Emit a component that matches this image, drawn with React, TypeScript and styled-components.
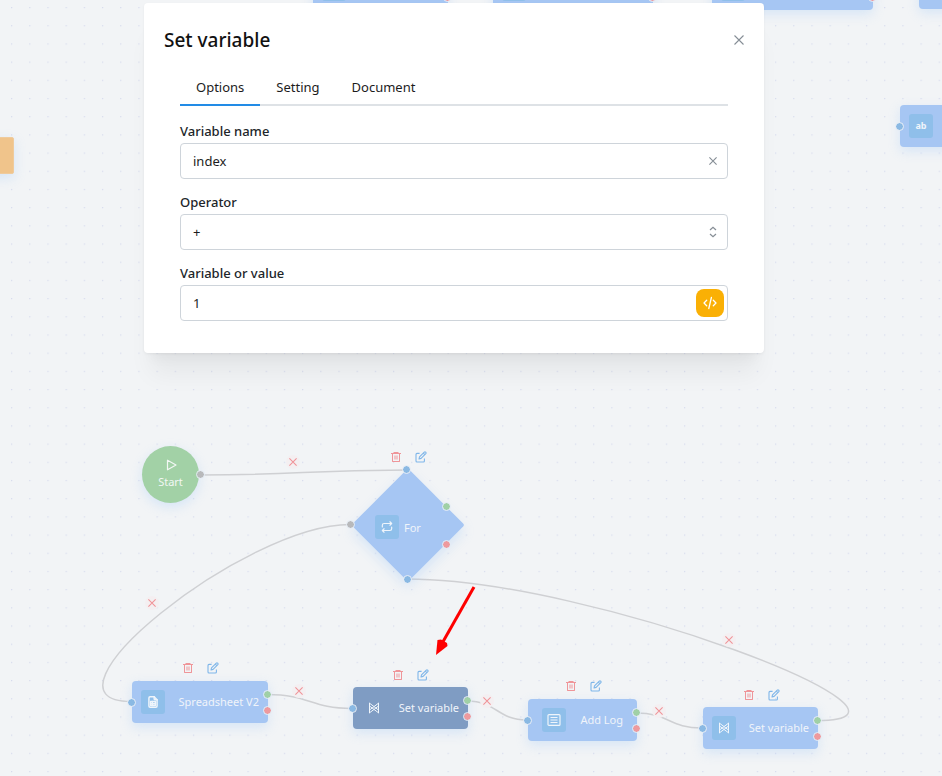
import React from "react";
import styled, { createGlobalStyle, css } from "styled-components";
import { RiDeleteBin6Line } from "react-icons/ri";
import { TbFileSpreadsheet, TbRepeat } from "react-icons/tb";

const GlobalStyle = createGlobalStyle`
  *, *::before, *::after { box-sizing: border-box; }
  body {
    margin: 0;
    background: #f2f4f6;
    font-family: "Noto Sans", "Open Sans", sans-serif;
    font-size: 13px;
    color: #111;
  }
  button, input, select { font: inherit; color: inherit; }
`;

const colors = {
  node: "#a6c6f3",
  active: "#7f9cc3",
  start: "#a2d1a6",
  chip: "#8fbfea",
  blue: "#8ab9e3",
  green: "#a0d0a6",
  red: "#ee9a9e",
  gray: "#b8b9bb",
  edge: "#cfd0d3",
};

const Page = styled.div`
  position: relative;
  min-height: 100vh;
  overflow: hidden;
`;

const Canvas = styled.main`
  position: absolute;
  inset: 0;
  overflow: hidden;
`;

const Drawing = styled.svg`
  position: absolute;
  inset: 0;
  width: 100%;
  height: 100%;
  pointer-events: none;
`;

type Box = { $x: number; $y: number };

const NodeCard = styled.div<Box & { $w: number; $active?: boolean; $wide?: boolean }>`
  position: absolute;
  left: ${(p) => p.$x}px;
  top: ${(p) => p.$y}px;
  width: ${(p) => p.$w}px;
  height: 42px;
  display: flex;
  align-items: center;
  justify-content: space-between;
  padding: 0 9px;
  ${(p) => p.$wide && css`padding: 0 14px;`}
  border-radius: 4px;
  background: ${(p) => (p.$active ? colors.active : colors.node)};
  box-shadow: 0 4px 12px rgba(150, 195, 250, 0.3);
  color: #f0f4fa;
  font-size: 11px;
  line-height: 16px;
  white-space: nowrap;
`;

const Chip = styled.span<{ $plain?: boolean }>`
  flex: none;
  display: flex;
  align-items: center;
  justify-content: center;
  width: 24px;
  height: 24px;
  border-radius: 3px;
  background: ${(p) => (p.$plain ? "transparent" : colors.chip)};
  color: #eff5fb;
  font-size: 9px;
  font-weight: 700;
`;

const StartNode = styled.div<Box>`
  position: absolute;
  left: ${(p) => p.$x}px;
  top: ${(p) => p.$y}px;
  width: 57px;
  height: 57px;
  border-radius: 50%;
  display: flex;
  flex-direction: column;
  align-items: center;
  justify-content: center;
  gap: 3px;
  background: ${colors.start};
  box-shadow: 0 4px 12px rgba(150, 195, 250, 0.3);
  color: #f2f7f4;
  font-size: 11px;
  line-height: 16px;
`;

const DiamondNode = styled.div<Box>`
  position: absolute;
  left: ${(p) => p.$x}px;
  top: ${(p) => p.$y}px;
  width: 114px;
  height: 114px;
  display: flex;
  align-items: center;
  gap: 5px;
  padding: 4px 0 0 24px;
  color: #f0f4fa;
  font-size: 11px;

  &::before {
    content: "";
    position: absolute;
    inset: 17px;
    border-radius: 2px;
    background: ${colors.node};
    box-shadow: 4px 4px 12px rgba(150, 195, 250, 0.3);
    transform: rotate(45deg);
  }

  > * { position: relative; }
`;

const Handle = styled.span<Box & { $tone: "blue" | "green" | "red" | "gray" }>`
  position: absolute;
  left: ${(p) => p.$x - 5}px;
  top: ${(p) => p.$y - 5}px;
  width: 9px;
  height: 9px;
  border-radius: 50%;
  background: ${(p) => colors[p.$tone]};
  border: 1px solid #e6edf5;
  background-clip: padding-box;
`;

const Tools = styled.div<Box>`
  position: absolute;
  left: ${(p) => p.$x}px;
  top: ${(p) => p.$y}px;
  display: flex;
  gap: 13px;
`;

const ToolButton = styled.button<{ $tone: "red" | "blue" }>`
  display: flex;
  padding: 0;
  border: 0;
  background: none;
  color: ${(p) => (p.$tone === "red" ? "#ef9599" : "#7fb6e9")};
  font-size: 12px;
  cursor: pointer;
`;

const EdgeButton = styled.button<Box>`
  position: absolute;
  left: ${(p) => p.$x - 7}px;
  top: ${(p) => p.$y - 7}px;
  width: 14px;
  height: 14px;
  display: flex;
  align-items: center;
  justify-content: center;
  padding: 0;
  border: 0;
  border-radius: 50%;
  background: #f4eff1;
  color: #f09297;
  cursor: pointer;
`;

const SideBlock = styled.div<Box>`
  position: absolute;
  left: ${(p) => p.$x}px;
  top: ${(p) => p.$y}px;
  width: 60px;
  height: 37px;
  border: 1px solid #efcb9d;
  border-radius: 2px;
  background: #f0c48b;
  box-shadow: 0 4px 12px rgba(150, 195, 250, 0.3);
`;

const Overlay = styled.div`
  position: relative;
  display: flex;
  justify-content: center;
  padding: 3px 34px 0 0;
  pointer-events: none;
`;

const Modal = styled.section`
  width: 620px;
  max-width: 100%;
  padding: 20px 20px 32px;
  border-radius: 4px;
  background: #fff;
  box-shadow: 0 1px 3px rgba(0, 0, 0, 0.05), 0 28px 23px -7px rgba(0, 0, 0, 0.05),
    0 12px 12px -7px rgba(0, 0, 0, 0.04);
  pointer-events: auto;
`;

const ModalHeader = styled.header`
  display: flex;
  align-items: center;
  justify-content: space-between;
  height: 34px;
`;

const Title = styled.h2`
  margin: 0;
  font-size: 19px;
  line-height: 28px;
  font-weight: 500;
`;

const IconButton = styled.button<{ $size: number }>`
  flex: none;
  width: ${(p) => p.$size}px;
  height: ${(p) => p.$size}px;
  display: flex;
  align-items: center;
  justify-content: center;
  padding: 0;
  border: 0;
  background: none;
  color: #868e96;
  cursor: pointer;
`;

const ModalBody = styled.div`
  padding: 0 16px;
`;

const TabList = styled.div`
  display: flex;
  margin-top: 12px;
  border-bottom: 2px solid #dee2e6;
`;

const Tab = styled.button<{ $active?: boolean }>`
  height: 37px;
  margin-bottom: -2px;
  padding: 0 16px;
  border: 0;
  border-bottom: 2px solid ${(p) => (p.$active ? "#228be6" : "transparent")};
  background: none;
  font-size: 13px;
  color: #1c1c1c;
  cursor: pointer;
`;

const Form = styled.form`
  display: flex;
  flex-direction: column;
  gap: 14px;
  padding-top: 16px;
`;

const FieldLabel = styled.label`
  display: block;
  height: 21px;
  line-height: 18px;
  font-weight: 500;
  color: #212529;
`;

const Control = styled.div<{ $right: number }>`
  display: flex;
  align-items: center;
  height: 36px;
  padding-right: ${(p) => p.$right}px;
  border: 1px solid #ced4da;
  border-radius: 4px;
  background: #fff;
`;

const entry = css`
  flex: 1;
  min-width: 0;
  height: 34px;
  padding: 0 12px;
  border: 0;
  outline: 0;
  background: transparent;
  color: #1c1c1c;
`;

const TextInput = styled.input`
  ${entry}
`;

const SelectWrap = styled(Control)`
  position: relative;
`;

const Select = styled.select`
  ${entry}
  appearance: none;
`;

const SelectArrows = styled.svg`
  position: absolute;
  right: 8px;
  pointer-events: none;
`;

const CodeButton = styled.button`
  flex: none;
  display: flex;
  align-items: center;
  justify-content: center;
  width: 28px;
  height: 28px;
  padding: 0;
  border: 0;
  border-radius: 8px;
  background: #fab005;
  color: #fff;
  cursor: pointer;
`;

const Cross = ({ size, width = 1 }: { size: number; width?: number }) => (
  <svg width={size} height={size} viewBox="0 0 10 10" fill="none" stroke="currentColor" strokeWidth={width}>
    <path d="M0.5 0.5L9.5 9.5M9.5 0.5L0.5 9.5" />
  </svg>
);

const EditIcon = () => (
  <svg width="12" height="12" viewBox="0 0 12 12" fill="none" stroke="currentColor" strokeWidth="1.1" strokeLinejoin="round">
    <path d="M4.6 2.4H2A1 1 0 0 0 1 3.4V10A1 1 0 0 0 2 11H8.4A1 1 0 0 0 9.4 10V7.4" />
    <path d="M4 8L4.5 5.8L9.3 1.1Q10 0.6 10.7 1.2Q11.4 1.9 10.8 2.7L6.1 7.4Z" />
    <path d="M8.3 2.2L9.8 3.7" />
  </svg>
);

const VariableIcon = () => (
  <svg width="12" height="12" viewBox="0 0 12 12" fill="none" stroke="currentColor" strokeWidth="1">
    <path d="M1.5 0.8V11.2M10.5 0.8V11.2M1.5 1.2L10.5 8M10.5 1.2L1.5 8M1.5 4L10.5 10.8M10.5 4L1.5 10.8" />
  </svg>
);

const ListIcon = () => (
  <svg width="14" height="14" viewBox="0 0 14 14" fill="none" stroke="currentColor" strokeWidth="1.2">
    <rect x="1" y="1.6" width="12" height="10.8" rx="1" />
    <path d="M3.5 4.5H10.5M3.5 7H10.5M3.5 9.5H10.5" />
  </svg>
);

const PlayIcon = () => (
  <svg width="12" height="12" viewBox="0 0 12 12" fill="none" stroke="currentColor" strokeWidth="1.2">
    <path d="M2.5 1.2V10.8L11 6Z" strokeLinejoin="round" />
  </svg>
);

const NodeTools = ({ x, y }: { x: number; y: number }) => (
  <Tools $x={x} $y={y}>
    <ToolButton $tone="red" aria-label="Delete node"><RiDeleteBin6Line /></ToolButton>
    <ToolButton $tone="blue" aria-label="Edit node"><EditIcon /></ToolButton>
  </Tools>
);

type NodeData = {
  x: number;
  y: number;
  w: number;
  label?: string;
  icon?: React.ReactNode;
  active?: boolean;
  wide?: boolean;
};

const FlowNode = ({ x, y, w, label, icon, active, wide }: NodeData) => (
  <NodeCard $x={x} $y={y} $w={w} $active={active} $wide={wide}>
    <Chip $plain={active}>{icon}</Chip>
    {label}
    <Handle $x={0} $y={22} $tone="blue" />
    <Handle $x={w} $y={14} $tone="green" />
    <Handle $x={w} $y={30} $tone="red" />
  </NodeCard>
);

const nodes: NodeData[] = [
  { x: 313, y: -32, w: 135 },
  { x: 493, y: -32, w: 160 },
  { x: 712, y: -32, w: 161 },
  { x: 919, y: -33, w: 130 },
  { x: 900, y: 105, w: 120, icon: "ab" },
  { x: 132, y: 681, w: 136, label: "Spreadsheet V2", icon: <TbFileSpreadsheet size={14} strokeWidth={2.5} /> },
  { x: 353, y: 687, w: 115, label: "Set variable", icon: <VariableIcon />, active: true },
  { x: 528, y: 699, w: 109, label: "Add Log", icon: <ListIcon />, wide: true },
  { x: 703, y: 707, w: 115, label: "Set variable", icon: <VariableIcon /> },
];

const tools = [
  [390, 451],
  [182, 662],
  [392, 669],
  [565, 680],
  [743, 689],
];

const edgeButtons = [
  [293, 462],
  [152, 603],
  [299, 691],
  [487, 701],
  [659, 711],
  [729, 640],
];

const edges = [
  "M200 475C303 475 303 470 407 470",
  "M350 524.5C244 524.5 25 701.5 131 701.5",
  "M407 579C592 579 958 720.5 817 720.5",
  "M267 694.5C310 694.5 310 708.5 352 708.5",
  "M467 701C497 701 497 720 527 720",
  "M636 713C669 713 669 728 702 728",
];

export default function App() {
  return (
    <Page>
      <GlobalStyle />
      <Canvas>
        <Drawing aria-hidden="true">
          <defs>
            <pattern id="dots" x="11" y="7" width="18.19" height="18.19" patternUnits="userSpaceOnUse">
              <circle cx="0.7" cy="0.7" r="0.6" fill="#cdd3ea" />
            </pattern>
          </defs>
          <rect width="100%" height="100%" fill="url(#dots)" />
          <g fill="none" stroke={colors.edge} strokeWidth="1.5">
            {edges.map((d) => <path key={d} d={d} />)}
          </g>
        </Drawing>
        {edgeButtons.map(([x, y]) => (
          <EdgeButton key={x} $x={x} $y={y} aria-label="Remove connection"><Cross size={8} width={1.3} /></EdgeButton>
        ))}
        <SideBlock $x={-46} $y={137} />
        <StartNode $x={142} $y={446}>
          <PlayIcon />
          Start
          <Handle $x={59} $y={29} $tone="gray" />
        </StartNode>
        <DiamondNode $x={351} $y={468}>
          <Chip><TbRepeat size={14} /></Chip>
          <span>For</span>
        </DiamondNode>
        <Handle $x={407} $y={470} $tone="blue" />
        <Handle $x={408} $y={580} $tone="blue" />
        <Handle $x={351} $y={525} $tone="gray" />
        <Handle $x={447} $y={507} $tone="green" />
        <Handle $x={447} $y={545} $tone="red" />
        {nodes.map((n) => <FlowNode key={n.x} {...n} />)}
        {tools.map(([x, y]) => <NodeTools key={x} x={x} y={y} />)}
        <Drawing aria-hidden="true">
          <path d="M474 587L440 647" stroke="#fe0000" strokeWidth="3" fill="none" />
          <path d="M436 655L437.5 640L441 639.5L447 643L447.5 646Z" fill="#fe0000" />
        </Drawing>
      </Canvas>
      <Overlay>
        <Modal role="dialog" aria-labelledby="modal-title">
          <ModalHeader>
            <Title id="modal-title">Set variable</Title>
            <IconButton $size={10} aria-label="Close"><Cross size={10} width={1.1} /></IconButton>
          </ModalHeader>
          <ModalBody>
            <TabList role="tablist">
              <Tab role="tab" aria-selected="true" $active>Options</Tab>
              <Tab role="tab" aria-selected="false">Setting</Tab>
              <Tab role="tab" aria-selected="false">Document</Tab>
            </TabList>
            <Form onSubmit={(e) => e.preventDefault()}>
              <div>
                <FieldLabel htmlFor="variable-name">Variable name</FieldLabel>
                <Control $right={5}>
                  <TextInput id="variable-name" defaultValue="index" />
                  <IconButton $size={18} type="button" aria-label="Clear"><Cross size={8} width={1.4} /></IconButton>
                </Control>
              </div>
              <div>
                <FieldLabel htmlFor="operator">Operator</FieldLabel>
                <SelectWrap $right={0}>
                  <Select id="operator" defaultValue="+">
                    <option>+</option>
                    <option>-</option>
                  </Select>
                  <SelectArrows width="12" height="12" viewBox="0 0 12 12" fill="none" stroke="#868e96" strokeWidth="1.2">
                    <path d="M3 4L6 1.2L9 4M3 8L6 10.8L9 8" />
                  </SelectArrows>
                </SelectWrap>
              </div>
              <div>
                <FieldLabel htmlFor="operand">Variable or value</FieldLabel>
                <Control $right={3}>
                  <TextInput id="operand" defaultValue="1" />
                  <CodeButton type="button" aria-label="Insert expression">
                    <svg width="14" height="14" viewBox="0 0 14 14" fill="none" stroke="currentColor" strokeWidth="1.3" strokeLinecap="round" strokeLinejoin="round">
                      <path d="M3.7 4.3L1 7L3.7 9.7M10.3 4.3L13 7L10.3 9.7M8.4 1.5L5.8 12.5" />
                    </svg>
                  </CodeButton>
                </Control>
              </div>
            </Form>
          </ModalBody>
        </Modal>
      </Overlay>
    </Page>
  );
}
